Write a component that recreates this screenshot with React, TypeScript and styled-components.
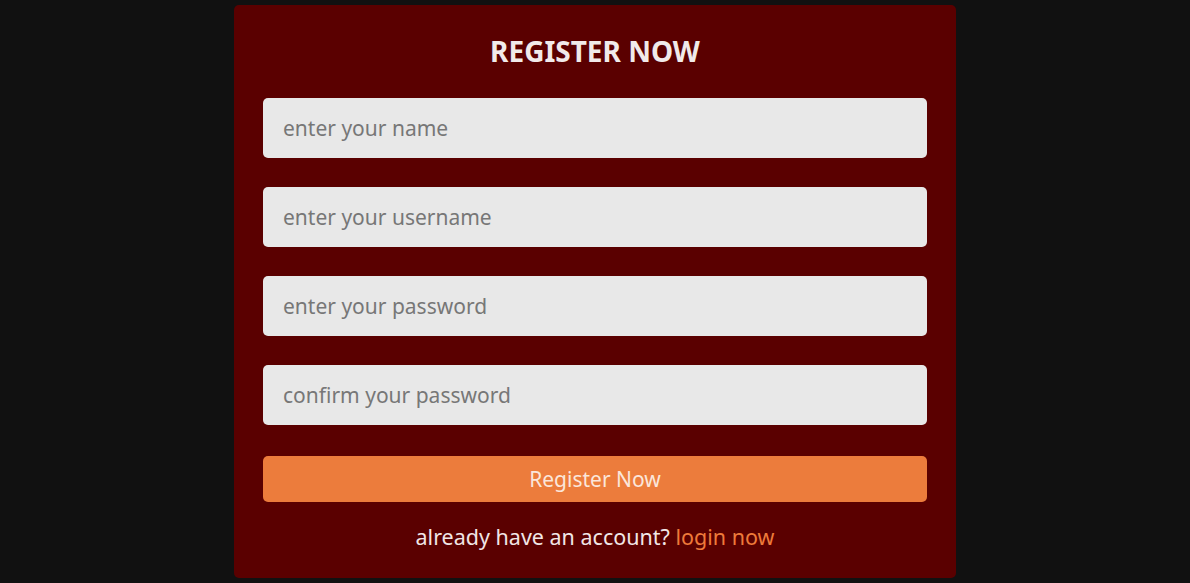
import React from 'react';
import styled, { createGlobalStyle } from 'styled-components';

const GlobalStyle = createGlobalStyle`
  * {
    box-sizing: border-box;
  }
  html, body {
    margin: 0;
    padding: 0;
    background: #111111;
    font-family: 'Noto Sans', 'Open Sans', sans-serif;
  }
`;

const Page = styled.div`
  min-height: 583px;
  display: flex;
  justify-content: center;
  padding-top: 5px;
`;

const Card = styled.form`
  width: 722px;
  height: 573px;
  background: #5a0000;
  border-radius: 5px;
  padding: 18px 29px 0;
  display: flex;
  flex-direction: column;
`;

const Title = styled.h3`
  margin: 0 0 19px;
  text-align: center;
  font-size: 28px;
  font-weight: 700;
  color: #f1eaea;
  text-transform: uppercase;
  line-height: 56px;
`;

const Field = styled.input`
  width: 100%;
  height: 60px;
  margin-bottom: 29px;
  border: none;
  outline: none;
  border-radius: 5px;
  background: #e8e8e8;
  padding: 0 20px;
  font-family: inherit;
  font-size: 21px;
  color: #333;

  &::placeholder {
    color: #777777;
  }
`;

const SubmitButton = styled.button`
  width: 100%;
  height: 46px;
  margin-top: 2px;
  border: none;
  border-radius: 5px;
  background: #ec7c3c;
  color: #fbe6da;
  font-family: inherit;
  font-size: 21px;
  cursor: pointer;
`;

const Footer = styled.p`
  margin: 20px 0 0;
  text-align: center;
  font-size: 21.5px;
  color: #f1e6e6;

  a {
    color: #ee7a3a;
    text-decoration: none;
  }
`;

const fields = [
  { type: 'text', placeholder: 'enter your name' },
  { type: 'text', placeholder: 'enter your username' },
  { type: 'password', placeholder: 'enter your password' },
  { type: 'password', placeholder: 'confirm your password' },
];

const App = () => {
  return (
    <>
      <GlobalStyle />
      <Page>
        <Card onSubmit={(e) => e.preventDefault()}>
          <Title>register now</Title>
          {fields.map((f) => (
            <Field key={f.placeholder} type={f.type} placeholder={f.placeholder} />
          ))}
          <SubmitButton type="submit">Register Now</SubmitButton>
          <Footer>
            already have an account? <a href="#">login now</a>
          </Footer>
        </Card>
      </Page>
    </>
  );
};

export default App;
